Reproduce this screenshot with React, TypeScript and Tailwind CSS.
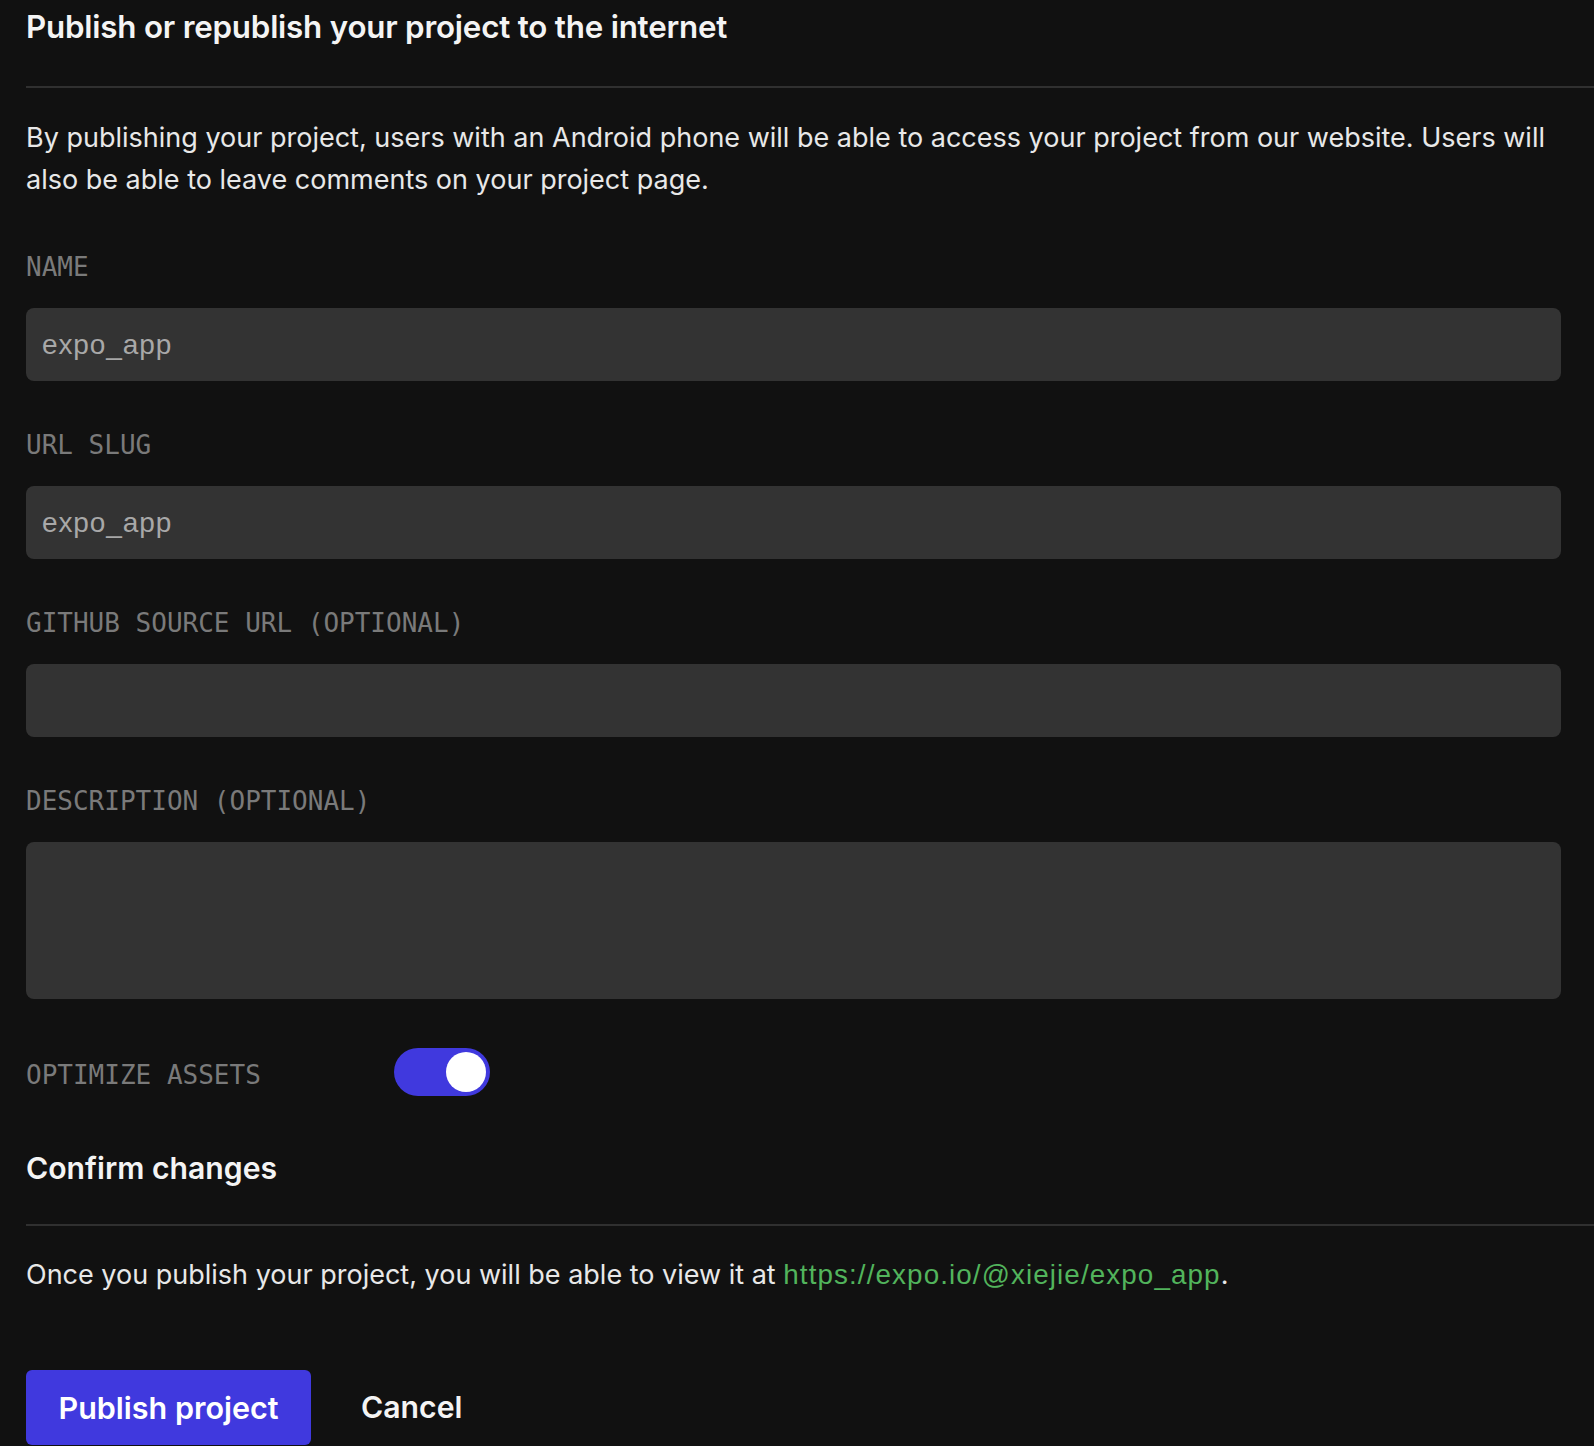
export default function App() {
  const sans = "font-['Inter','Noto_Sans',sans-serif]";
  const mono = "font-['DejaVu_Sans_Mono','Liberation_Mono',monospace]";
  const system = "font-['Liberation_Sans','Roboto',sans-serif] tracking-[0.9px]";
  const fieldLabel = `${mono} block h-[32px] text-[26px] leading-[32px] text-[#7a7a7a]`;
  const fieldInput = `mt-[25px] h-[73px] w-full rounded-[8px] bg-[#333333] px-[16px] ${system} text-[28px] text-[#a8a8a8] outline-none`;

  return (
    <div className={`min-h-screen w-full bg-[#111111] pl-[26px] ${sans}`}>
      <h1 className="pt-[7px] text-[31.3px] leading-[40px] font-semibold tracking-[-0.2px] text-[#f4f4f4]">
        Publish or republish your project to the internet
      </h1>
      <div className="mt-[39px] h-[2px] w-full bg-[#303030]" />

      <div className="pr-[33px]">
        <p className="mt-[29px] text-[27px] leading-[42px] text-[#e8e8e8]">
          By publishing your project, users with an Android phone will be able to access your project from our website.
          Users will also be able to leave comments on your project page.
        </p>

        <div className="mt-[50px]">
          <label className={fieldLabel}>NAME</label>
          <input className={fieldInput} defaultValue="expo_app" />
        </div>

        <div className="mt-[48px]">
          <label className={fieldLabel}>URL SLUG</label>
          <input className={fieldInput} defaultValue="expo_app" />
        </div>

        <div className="mt-[48px]">
          <label className={fieldLabel}>GITHUB SOURCE URL (OPTIONAL)</label>
          <input className={fieldInput} defaultValue="" />
        </div>

        <div className="mt-[48px]">
          <label className={fieldLabel}>DESCRIPTION (OPTIONAL)</label>
          <textarea className={`${fieldInput} block h-[157px] resize-none py-[16px]`} defaultValue="" />
        </div>

        <div className="mt-[49px] flex h-[48px] items-center">
          <span className={`${mono} w-[368px] pt-[6px] text-[26px] leading-[32px] text-[#7a7a7a]`}>
            OPTIMIZE ASSETS
          </span>
          <button
            type="button"
            className="flex h-[48px] w-[96px] items-center justify-end rounded-full bg-[#4039de] px-[4px]"
          >
            <span className="h-[40px] w-[40px] rounded-full bg-white" />
          </button>
        </div>
      </div>

      <h2 className="mt-[52px] text-[30.2px] leading-[40px] font-semibold text-[#f4f4f4]">Confirm changes</h2>
      <div className="mt-[36px] h-[2px] w-full bg-[#303030]" />

      <p className="mt-[28px] text-[27px] leading-[42px] text-[#e8e8e8]">
        Once you publish your project, you will be able to view it at{' '}
        <span className="font-['Liberation_Sans','Roboto',sans-serif] text-[27.8px] tracking-[1.1px] text-[#52b45c]">
          https://expo.io/@xiejie/expo_app
        </span>
        .
      </p>

      <div className="mt-[74px] flex items-center">
        <button
          type="button"
          className="h-[75px] w-[285px] rounded-[6px] bg-[#4039de] text-[30.5px] font-semibold text-white"
        >
          Publish project
        </button>
        <button type="button" className="ml-[50px] text-[30.2px] font-semibold text-[#f4f4f4]">
          Cancel
        </button>
      </div>
    </div>
  );
}
